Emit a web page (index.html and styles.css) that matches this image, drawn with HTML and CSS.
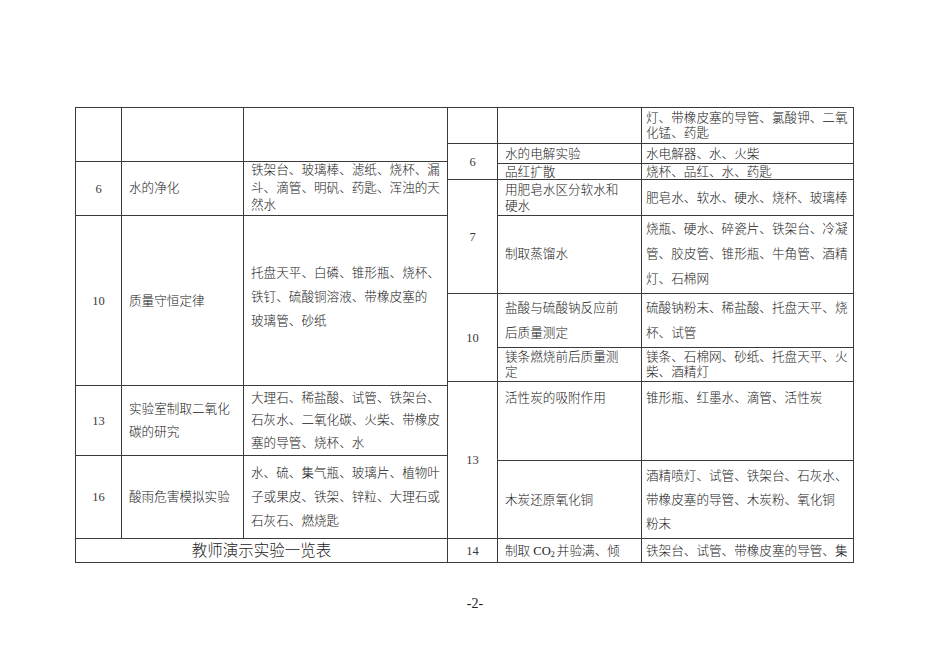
FILE: index.html
```html
<!DOCTYPE html>
<html lang="zh-CN">
<head>
<meta charset="utf-8">
<title>实验一览表</title>
<link rel="stylesheet" href="styles.css">
</head>
<body>
<div class="page">
  <div class="tables">
    <table class="tbl left">
      <colgroup><col class="c-num-l"><col class="c-name-l"><col class="c-mat-l"></colgroup>
      <tr class="h54"><td class="num"></td><td></td><td></td></tr>
      <tr class="h54">
        <td class="num">6</td>
        <td class="lh17">水的净化</td>
        <td class="lh17">铁架台、玻璃棒、滤纸、烧杯、漏<br>斗、滴管、明矾、药匙、浑浊的天<br>然水</td>
      </tr>
      <tr class="h170">
        <td class="num">10</td>
        <td class="lh24">质量守恒定律</td>
        <td class="lh24 up4">托盘天平、白磷、锥形瓶、烧杯、<br>铁钉、硫酸铜溶液、带橡皮塞的<br>玻璃管、砂纸</td>
      </tr>
      <tr class="h70">
        <td class="num">13</td>
        <td class="lh22">实验室制取二氧化<br>碳的研究</td>
        <td class="lh22">大理石、稀盐酸、试管、铁架台、<br>石灰水、二氧化碳、火柴、带橡皮<br>塞的导管、烧杯、水</td>
      </tr>
      <tr class="h83">
        <td class="num">16</td>
        <td class="lh24">酸雨危害模拟实验</td>
        <td class="lh24">水、硫、集气瓶、玻璃片、植物叶<br>子或果皮、铁架、锌粒、大理石或<br>石灰石、燃烧匙</td>
      </tr>
      <tr class="h24">
        <td class="caption" colspan="3">教师演示实验一览表</td>
      </tr>
    </table>
    <table class="tbl right">
      <colgroup><col class="c-num-r"><col class="c-name-r"><col class="c-mat-r"></colgroup>
      <tr class="h36"><td class="num"></td><td></td><td class="lh15 mat">灯、带橡皮塞的导管、氯酸钾、二氧<br>化锰、药匙</td></tr>
      <tr class="h20">
        <td class="num" rowspan="2">6</td>
        <td class="lh16">水的电解实验</td>
        <td class="lh16 mat">水电解器、水、火柴</td>
      </tr>
      <tr class="h16"><td class="lh14">品红扩散</td><td class="lh14 mat">烧杯、品红、水、药匙</td></tr>
      <tr class="h36">
        <td class="num" rowspan="2">7</td>
        <td class="lh16">用肥皂水区分软水和<br>硬水</td>
        <td class="lh16 mat">肥皂水、软水、硬水、烧杯、玻璃棒</td>
      </tr>
      <tr class="h78"><td class="lh25">制取蒸馏水</td><td class="lh25 mat">烧瓶、硬水、碎瓷片、铁架台、冷凝<br>管、胶皮管、锥形瓶、牛角管、酒精<br>灯、石棉网</td></tr>
      <tr class="h54">
        <td class="num" rowspan="2">10</td>
        <td class="lh25">盐酸与硫酸钠反应前<br>后质量测定</td>
        <td class="lh25 mat">硫酸钠粉末、稀盐酸、托盘天平、烧<br>杯、试管</td>
      </tr>
      <tr class="h34"><td class="lh15">镁条燃烧前后质量测<br>定</td><td class="lh15 mat">镁条、石棉网、砂纸、托盘天平、火<br>柴、酒精灯</td></tr>
      <tr class="h79">
        <td class="num" rowspan="2">13</td>
        <td class="lh26 top">活性炭的吸附作用</td>
        <td class="lh26 top mat">锥形瓶、红墨水、滴管、活性炭</td>
      </tr>
      <tr class="h78"><td class="lh24">木炭还原氧化铜</td><td class="lh24 mat">酒精喷灯、试管、铁架台、石灰水、<br>带橡皮塞的导管、木炭粉、氧化铜<br>粉末</td></tr>
      <tr class="h24">
        <td class="num">14</td>
        <td class="lh20">制取 CO<span class="sub">2</span>并验满、倾</td>
        <td class="lh20 mat">铁架台、试管、带橡皮塞的导管、集</td>
      </tr>
    </table>
  </div>
  <div class="pagenum">-2-</div>
</div>
</body>
</html>
```
FILE: styles.css
```css
html, body {
  margin: 0;
  padding: 0;
  background: #ffffff;
}

body {
  color: #222222;
  font-family: "Liberation Serif", "Noto Sans CJK SC", serif;
}

.page {
  width: 950px;
  height: 672px;
  box-sizing: border-box;
  padding-top: 107px;
}

.tables {
  display: flex;
  align-items: flex-start;
  padding-left: 75px;
}

.tbl {
  border-collapse: collapse;
  table-layout: fixed;
  font-size: 12.6px;
  font-weight: 300;
}

.tbl td {
  border: 1px solid #3a3a3a;
  padding: 0 3px 0 7px;
  vertical-align: middle;
  white-space: nowrap;
  overflow: hidden;
  line-height: 18px;
}

.left {
  width: 372px;
}

.right {
  width: 406px;
  margin-left: -1px;
}

.c-num-l { width: 46px; }
.c-name-l { width: 122px; }
.c-mat-l { width: 204px; }

.c-num-r { width: 50px; }
.c-name-r { width: 144px; }
.c-mat-r { width: 212px; }

.tbl td.num {
  text-align: center;
  padding: 0;
  font-size: 12.5px;
  font-weight: 400;
  color: #3a3a3a;
}

.tbl td.mat {
  padding-left: 4px;
  padding-right: 1px;
}

.tbl td.caption {
  text-align: center;
  font-size: 15.5px;
  line-height: 22px;
  padding: 0;
}

.tbl td.top {
  vertical-align: top;
  padding-top: 3px;
}

.tbl td.up4 {
  padding-bottom: 8px;
}

.h16 { height: 16px; }
.h20 { height: 20px; }
.h24 { height: 24px; }
.h34 { height: 34px; }
.h36 { height: 36px; }
.h54 { height: 54px; }
.h70 { height: 70px; }
.h78 { height: 78px; }
.h79 { height: 79px; }
.h83 { height: 83px; }
.h170 { height: 170px; }

.tbl td.lh14 { line-height: 14px; }
.tbl td.lh15 { line-height: 15px; }
.tbl td.lh16 { line-height: 16px; }
.tbl td.lh17 { line-height: 17.5px; }
.tbl td.lh20 { line-height: 20px; }
.tbl td.lh22 { line-height: 22.5px; }
.tbl td.lh24 { line-height: 24px; }
.tbl td.lh25 { line-height: 25px; }
.tbl td.lh26 { line-height: 26px; }

.sub {
  font-size: 8px;
  vertical-align: -2px;
  line-height: 0;
  margin-right: 2px;
}

.pagenum {
  text-align: center;
  font-size: 14px;
  margin-top: 33px;
  color: #222222;
}
```
